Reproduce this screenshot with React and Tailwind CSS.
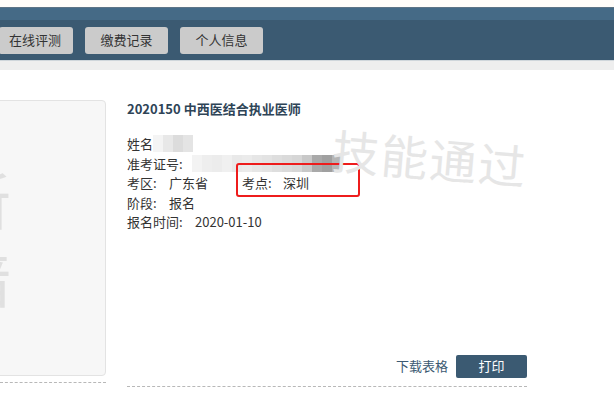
import React from 'react'

const font = { fontFamily: '"Noto Sans CJK SC", "Noto Sans", sans-serif' }

function Mosaic({ cells }) {
  return (
    <div className="flex h-[17px]">
      {cells.map((c, i) => (
        <div key={i} className="h-full w-[10px]" style={{ background: c }} />
      ))}
    </div>
  )
}

export default function App() {
  const nameCells = ['#f4f4f4', '#e8e8e8', '#dcdcdc', '#e4e4e4']
  const idCells = ['#f3f3f3', '#eeeeee', '#ececec', '#f0f0f0', '#e9e9e9', '#ebebeb', '#e6e6e6', '#e3e3e3', '#dedede', '#dadada', '#d6d6d6', '#c8c8c8', '#a9a9a9', '#a0a0a0', '#b5b5b5']

  return (
    <div className="w-[614px] h-[401px] overflow-hidden bg-white relative" style={font}>
      <div className="h-[7px] bg-[#fffcf8]" />
      {/* nav */}
      <div className="h-[13px] bg-[#456a86] border-t border-[#5d7384]" />
      <div className="h-[40px] bg-[#3b5a72] flex items-center gap-[12px] pl-0">
        <button className="h-[27px] w-[74px] -ml-[1px] rounded-[3px] bg-[#cbcbcb] text-[13px] text-[#333] text-left pl-[10px]">在线评测</button>
        <button className="h-[27px] w-[83px] rounded-[3px] bg-[#cbcbcb] text-[13px] text-[#333]">缴费记录</button>
        <button className="h-[27px] w-[83px] rounded-[3px] bg-[#cbcbcb] text-[13px] text-[#333]">个人信息</button>
      </div>
      <div className="h-[10px] bg-[#eeeeee] border-t border-[#cfd6db]" />

      {/* content */}
      <div className="flex gap-[21px] pt-[30px]">
        <div className="w-[106px] shrink-0">
          <div className="h-[276px] bg-[#f7f7f7] border border-[#e3e3e3] rounded-[4px] -ml-[4px] w-[110px] relative overflow-hidden">
            <div className="absolute left-[-48px] top-[58px] text-[62px] leading-[78px] text-[#e0e0e0]">
              <div>新</div>
              <div>暗</div>
            </div>
          </div>
          <div className="mt-[6px] border-t border-dashed border-[#b8b8b8]" />
        </div>

        <div className="w-[400px] relative">
          <div className="text-[13px] font-bold text-[#2e4457] leading-[18px]">2020150 中西医结合执业医师</div>

          <div className="mt-[16px] text-[13px] text-[#333] leading-[19.5px]">
            <div className="flex items-center">
              <span>姓名</span>
              <Mosaic cells={nameCells} />
            </div>
            <div className="flex items-center">
              <span>准考证号:</span>
              <div className="ml-[9px] rounded-r-[3px] overflow-hidden">
                <Mosaic cells={idCells} />
              </div>
            </div>
            <div className="flex">
              <span className="w-[42px]">考区:</span>
              <span className="w-[73px]">广东省</span>
              <span className="w-[41px]">考点:</span>
              <span>深圳</span>
            </div>
            <div className="flex">
              <span className="w-[42px]">阶段:</span>
              <span>报名</span>
            </div>
            <div className="flex">
              <span className="w-[68px]">报名时间:</span>
              <span>2020-01-10</span>
            </div>
          </div>

          {/* red highlight box */}
          <div className="absolute left-[109px] top-[63px] w-[124px] h-[34px] border-2 border-[#ee1c1c] rounded-[3px]" />

          {/* watermark */}
          <div className="absolute left-[205px] top-[22px] text-[47px] tracking-[2px] text-[#e6e6e6] rotate-[5deg] whitespace-nowrap pointer-events-none">技能通过</div>

          <div className="mt-[123px] flex items-center justify-end gap-[8px] pr-0">
            <span className="text-[13px] text-[#3c5a72]">下载表格</span>
            <button className="h-[23px] w-[71px] rounded-[2px] bg-[#3b5a72] text-white text-[13px]">打印</button>
          </div>
          <div className="mt-[8px] border-t border-dashed border-[#b8b8b8]" />
        </div>
      </div>
    </div>
  )
}
